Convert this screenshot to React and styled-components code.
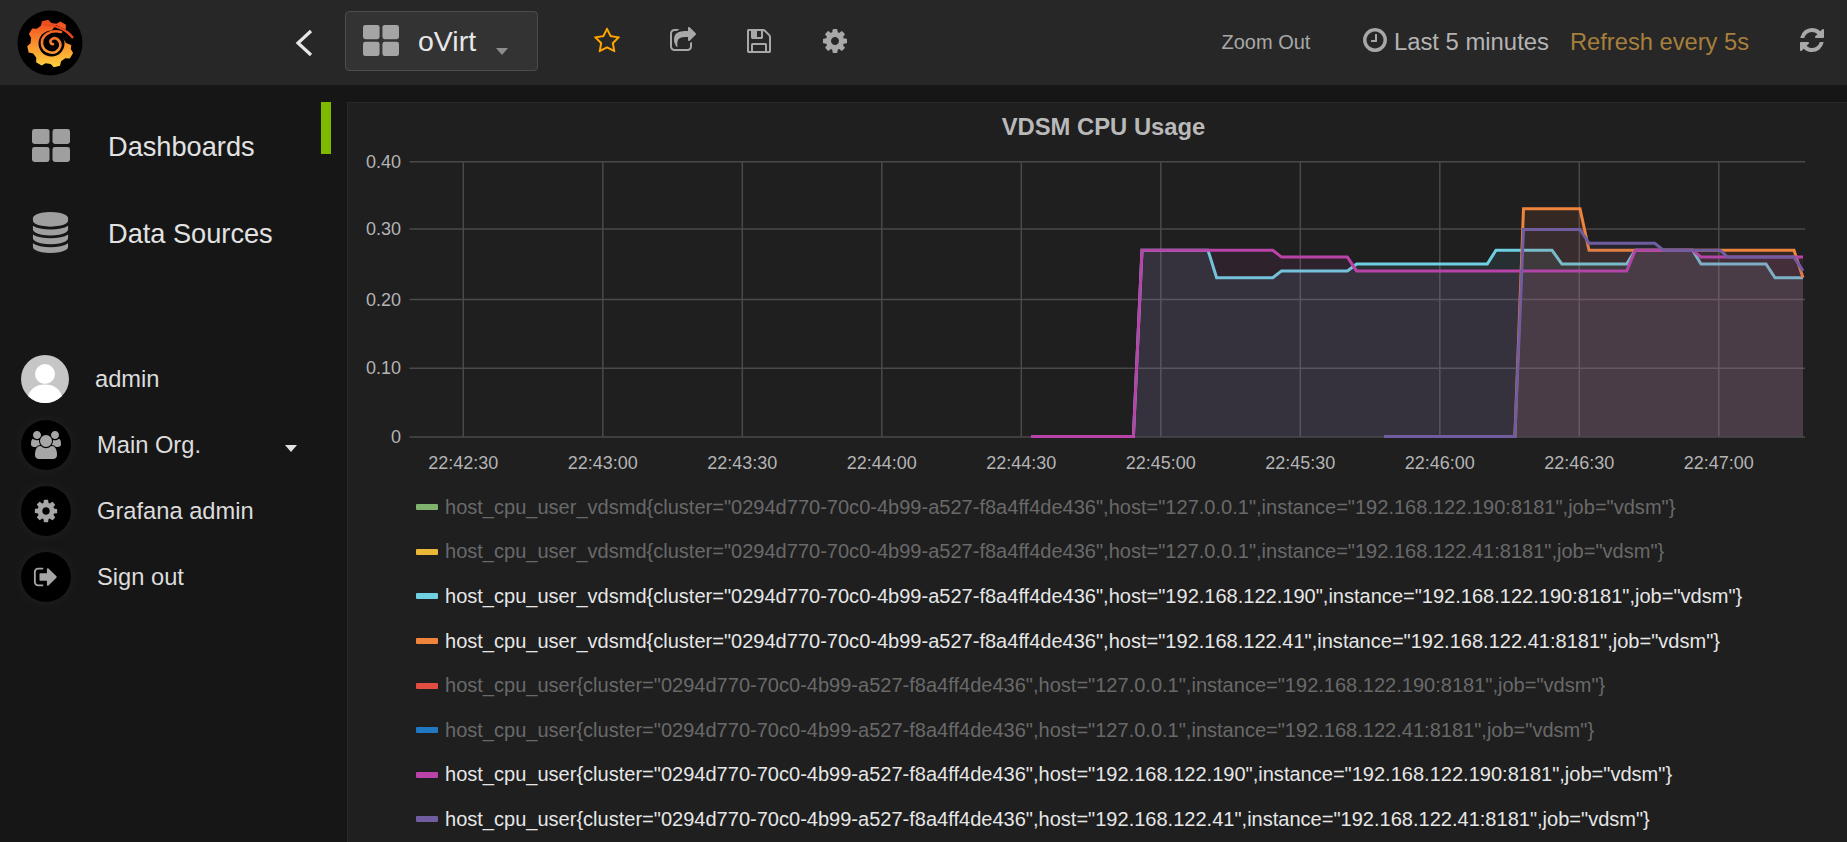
import styled, { createGlobalStyle } from "styled-components";

const GlobalStyle = createGlobalStyle`
  html, body {
    margin: 0;
    height: 100%;
    background: #161616;
    overflow: hidden;
  }
  body {
    font-family: "Liberation Sans", Arial, sans-serif;
  }
`;

// font awesome 4 glyphs
const ICONS = {
  star: "M1201 1004l306-297-422-62-189-382-189 382-422 62 306 297-73 421 378-199 377 199zm527-357q0 22-26 48l-363 354 86 500q1 7 1 20 0 50-41 50-19 0-40-12l-449-236-449 236q-22 12-40 12-21 0-31.5-14.5t-10.5-35.5q0-6 2-20l86-500-364-354q-25-27-25-48 0-37 56-46l502-73 225-455q19-41 49-41t49 41l225 455 502 73q56 9 56 46z",
  share: "M1472 989v259q0 119-84.5 203.5t-203.5 84.5h-832q-119 0-203.5-84.5t-84.5-203.5v-832q0-119 84.5-203.5t203.5-84.5h255q13 0 22.5 9.5t9.5 22.5q0 27-26 32-77 26-133 60-10 4-16 4h-112q-66 0-113 47t-47 113v832q0 66 47 113t113 47h832q66 0 113-47t47-113v-214q0-19 18-29 28-13 54-37 16-16 35-8 21 9 21 29zm237-496l-384 384q-18 19-45 19-12 0-25-5-39-17-39-59v-192h-160q-323 0-438 131-119 137-74 473 3 23-20 34-8 2-12 2-16 0-26-13-10-14-21-31t-39.5-68.5-49.5-99.5-38.5-114-17.5-122q0-49 3.5-91t14-90 28-88 47-81.5 68.5-74 94.5-61.5 124.5-48.5 159.5-30.5 196.5-11h160v-192q0-42 39-59 13-5 25-5 26 0 45 19l384 384q19 19 19 45t-19 45z",
  save: "M512 1536h768v-384h-768v384zm896 0h128v-896q0-14-10-38.5t-20-34.5l-281-281q-10-10-34-20t-39-10v416q0 40-28 68t-68 28h-576q-40 0-68-28t-28-68v-416h-128v1280h128v-416q0-40 28-68t68-28h832q40 0 68 28t28 68v416zm-384-928v-320q0-13-9.5-22.5t-22.5-9.5h-192q-13 0-22.5 9.5t-9.5 22.5v320q0 13 9.5 22.5t22.5 9.5h192q13 0 22.5-9.5t9.5-22.5zm640 32v928q0 40-28 68t-68 28h-1344q-40 0-68-28t-28-68v-1344q0-40 28-68t68-28h928q40 0 88 20t76 48l280 280q28 28 48 76t20 88z",
  cog: "M1152 896q0-106-75-181t-181-75-181 75-75 181 75 181 181 75 181-75 75-181zm512-109v222q0 12-8 23t-20 13l-185 28q-19 54-39 91 35 50 107 138 10 12 10 25t-9 23q-27 37-99 108t-94 71q-12 0-26-9l-138-108q-44 23-91 38-16 136-29 186-7 28-36 28h-222q-14 0-24.5-8.5t-11.5-21.5l-28-184q-49-16-90-37l-141 107q-10 9-25 9-14 0-25-11-126-114-165-168-7-10-7-23 0-12 8-23 15-21 51-66.5t54-70.5q-27-50-41-99l-183-27q-13-2-21-12.5t-8-23.5v-222q0-12 8-23t19-13l186-28q14-46 39-92-40-57-107-138-10-12-10-24 0-10 9-23 26-36 98.5-107.5t94.5-71.5q13 0 26 10l138 107q44-23 91-38 16-136 29-186 7-28 36-28h222q14 0 24.5 8.5t11.5 21.5l28 184q49 16 90 37l142-107q9-9 24-9 13 0 25 10 129 119 165 170 7 8 7 22 0 12-8 23-15 21-51 66.5t-54 70.5q26 50 41 98l183 28q13 2 21 12.5t8 23.5z",
  clock: "M1024 544v448q0 14-9 23t-23 9h-320q-14 0-23-9t-9-23v-64q0-14 9-23t23-9h224v-352q0-14 9-23t23-9h64q14 0 23 9t9 23zm416 352q0-148-73-273t-198-198-273-73-273 73-198 198-73 273 73 273 198 198 273 73 273-73 198-198 73-273zm224 0q0 209-103 385.5t-279.5 279.5-385.5 103-385.5-103-279.5-279.5-103-385.5 103-385.5 279.5-279.5 385.5-103 385.5 103 279.5 279.5 103 385.5z",
  refresh: "M1639 1056q0 5-1 7-64 268-268 434.5t-478 166.5q-146 0-282.5-55t-243.5-157l-129 129q-19 19-45 19t-45-19-19-45v-448q0-26 19-45t45-19h448q26 0 45 19t19 45-19 45l-137 137q71 66 161 102t187 36q134 0 250-65t186-179q11-17 53-117 8-23 30-23h192q13 0 22.5 9.5t9.5 22.5zm25-800v448q0 26-19 45t-45 19h-448q-26 0-45-19t-19-45 19-45l138-138q-148-137-349-137-134 0-250 65t-186 179q-11 17-53 117-8 23-30 23h-199q-13 0-22.5-9.5t-9.5-22.5v-7q65-268 270-434.5t480-166.5q146 0 284 55.5t245 156.5l130-129q19-19 45-19t45 19 19 45z",
  signOut: "M704 1440q0 4 1 20t.5 26.5-3 23.5-10 19.5-20.5 6.5h-320q-119 0-203.5-84.5t-84.5-203.5v-704q0-119 84.5-203.5t203.5-84.5h320q13 0 22.5 9.5t9.5 22.5q0 4 1 20t.5 26.5-3 23.5-10 19.5-20.5 6.5h-320q-66 0-113 47t-47 113v704q0 66 47 113t113 47h312l11.5 1 11.5 3 8 5.5 7 9 2 13.5zm928-544q0 26-19 45l-544 544q-19 19-45 19t-45-19-19-45v-288h-448q-26 0-45-19t-19-45v-384q0-26 19-45t45-19h448v-288q0-26 19-45t45-19 45 19l544 544q19 19 19 45z",
  database: "M896 768q237 0 443-43t325-127v170q0 69-103 128t-280 93.5-385 34.5-385-34.5-280-93.5-103-128v-170q119 84 325 127t443 43zm0 768q237 0 443-43t325-127v170q0 69-103 128t-280 93.5-385 34.5-385-34.5-280-93.5-103-128v-170q119 84 325 127t443 43zm0-384q237 0 443-43t325-127v170q0 69-103 128t-280 93.5-385 34.5-385-34.5-280-93.5-103-128v-170q119 84 325 127t443 43zm0-1152q208 0 385 34.5t280 93.5 103 128v128q0 69-103 128t-280 93.5-385 34.5-385-34.5-280-93.5-103-128v-128q0-69 103-128t280-93.5 385-34.5z",
  users: "M593 896q-162 5-265 128h-134q-82 0-138-40.5t-56-118.5q0-353 124-353 6 0 43.5 21t97.5 42.5 119 21.5q67 0 133-23-5 37-5 66 0 139 81 256zm1071 637q0 120-73 189.5t-194 69.5h-874q-121 0-194-69.5t-73-189.5q0-53 3.5-103.5t14-109 26.5-108.5 43-97.5 62-81 85.5-53.5 111.5-20q10 0 43 21.5t73 48 107 48 135 21.5 135-21.5 107-48 73-48 43-21.5q61 0 111.5 20t85.5 53.5 62 81 43 97.5 26.5 108.5 14 109 3.5 103.5zm-1024-1277q0 106-75 181t-181 75-181-75-75-181 75-181 181-75 181 75 75 181zm704 384q0 159-112.5 271.5t-271.5 112.5-271.5-112.5-112.5-271.5 112.5-271.5 271.5-112.5 271.5 112.5 112.5 271.5zm576 225q0 78-56 118.5t-138 40.5h-134q-103-123-265-128 81-117 81-256 0-29-5-66 66 23 133 23 59 0 119-21.5t97.5-42.5 43.5-21q124 0 124 353zm-128-609q0 106-75 181t-181 75-181-75-75-181 75-181 181-75 181 75 75 181z",
};

const Fa = ({name, size, wide, color}) => (
  <svg width={size} height={size} viewBox={wide ? "0 0 1920 1792" : "0 0 1792 1792"} fill={color} style={{display: "block", flexShrink: 0}}>
    <path d={ICONS[name]} />
  </svg>
);

const DashIcon = ({width, height, color}) => (
  <svg width={width} height={height} viewBox="0 0 38 34" fill={color} preserveAspectRatio="none" style={{display: "block", flexShrink: 0}}>
    <rect x="0" y="0" width="17.5" height="15.5" rx="2.5" />
    <rect x="20.5" y="0" width="17.5" height="15.5" rx="2.5" />
    <rect x="0" y="18.5" width="17.5" height="15.5" rx="2.5" />
    <rect x="20.5" y="18.5" width="17.5" height="15.5" rx="2.5" />
  </svg>
);

const gearPoints = () => {
  const cx = 41, cy = 38.5, teeth = 8, pts = [];
  for (let i = 0; i < teeth; i++) {
    const a = (i / teeth) * Math.PI * 2 - Math.PI / 2 - 0.25;
    const step = (Math.PI * 2) / teeth;
    [[-0.34, 20.5], [-0.17, 24], [0.17, 24], [0.34, 20.5]].forEach(([d, r]) => {
      const t = a + d * step;
      pts.push(`${(cx + Math.cos(t) * r).toFixed(1)},${(cy + Math.sin(t) * r).toFixed(1)}`);
    });
  }
  return pts.join(" ");
};

const GrafanaLogo = () => (
  <svg width="80" height="76" viewBox="0 0 80 76" style={{display: "block"}}>
    <defs>
      <linearGradient id="flame" x1="0" y1="0" x2="0" y2="1">
        <stop offset="0" stopColor="#f0451f" />
        <stop offset="0.5" stopColor="#fb8f2c" />
        <stop offset="1" stopColor="#fdd23f" />
      </linearGradient>
      <linearGradient id="flameInner" gradientUnits="userSpaceOnUse" x1="0" y1="14" x2="0" y2="60">
        <stop offset="0" stopColor="#f0451f" />
        <stop offset="1" stopColor="#fdb43a" />
      </linearGradient>
    </defs>
    <circle cx="40" cy="38" r="32.5" fill="#000" />
    <polygon points={gearPoints()} fill="url(#flame)" />
    <path d="M46 20 L68 30 L66 42 L56 38 Q52 30 42 25 Z" fill="#000" />
    <circle cx="41.5" cy="38.5" r="13" fill="#000" />
    <path d="M34 19.5 C46 20 57 25 63 33" fill="none" stroke="#ea4a20" strokeWidth="2.4" />
    <path d="M51 27 C40 24 31 31 32 39 C33 47 44 51 49 44 C53 38 47 31 42 34 C39 36 41 40 43 39" fill="none" stroke="url(#flameInner)" strokeWidth="2.6" strokeLinecap="round" />
  </svg>
);

const LEGEND = [
  {color: "#7eb26d", off: true, text: 'host_cpu_user_vdsmd{cluster="0294d770-70c0-4b99-a527-f8a4ff4de436",host="127.0.0.1",instance="192.168.122.190:8181",job="vdsm"}'},
  {color: "#eab839", off: true, text: 'host_cpu_user_vdsmd{cluster="0294d770-70c0-4b99-a527-f8a4ff4de436",host="127.0.0.1",instance="192.168.122.41:8181",job="vdsm"}'},
  {color: "#6ed0e0", text: 'host_cpu_user_vdsmd{cluster="0294d770-70c0-4b99-a527-f8a4ff4de436",host="192.168.122.190",instance="192.168.122.190:8181",job="vdsm"}'},
  {color: "#ef843c", text: 'host_cpu_user_vdsmd{cluster="0294d770-70c0-4b99-a527-f8a4ff4de436",host="192.168.122.41",instance="192.168.122.41:8181",job="vdsm"}'},
  {color: "#e24d42", off: true, text: 'host_cpu_user{cluster="0294d770-70c0-4b99-a527-f8a4ff4de436",host="127.0.0.1",instance="192.168.122.190:8181",job="vdsm"}'},
  {color: "#1f78c1", off: true, text: 'host_cpu_user{cluster="0294d770-70c0-4b99-a527-f8a4ff4de436",host="127.0.0.1",instance="192.168.122.41:8181",job="vdsm"}'},
  {color: "#ba43a9", text: 'host_cpu_user{cluster="0294d770-70c0-4b99-a527-f8a4ff4de436",host="192.168.122.190",instance="192.168.122.190:8181",job="vdsm"}'},
  {color: "#705da0", text: 'host_cpu_user{cluster="0294d770-70c0-4b99-a527-f8a4ff4de436",host="192.168.122.41",instance="192.168.122.41:8181",job="vdsm"}'},
];

// [x on the page, value], read off the graph
const SERIES = [
  {color: "#6ed0e0", points: [[1031, 0], [1133.4, 0], [1142, .27], [1208, .27], [1216.6, .23], [1272.8, .23], [1281.5, .24], [1347.4, .24], [1356.6, .25], [1487.3, .25], [1496, .27], [1552, .27], [1561.9, .25], [1626.7, .25], [1635.3, .27], [1692.6, .27], [1701, .25], [1766, .25], [1775, .23], [1803, .23]]},
  {color: "#ef843c", points: [[1384, 0], [1514.9, 0], [1523.5, .33], [1580, .33], [1589, .27], [1794, .27], [1803, .23]]},
  {color: "#ba43a9", points: [[1031, 0], [1133.4, 0], [1142, .27], [1272.8, .27], [1281.5, .26], [1347.4, .26], [1356.6, .24], [1626.7, .24], [1635.3, .27], [1692.6, .27], [1701, .26], [1803, .26]]},
  {color: "#705da0", points: [[1384, 0], [1514.9, 0], [1523.5, .30], [1580, .30], [1589, .28], [1654.8, .28], [1663.4, .27], [1720, .27], [1727.7, .26], [1794, .26], [1803, .24]]},
];

const BASE_Y = 436.5;
const valueY = (v) => BASE_Y - v * 690;
const pointList = (points) => points.map(([x, v]) => `${x},${valueY(v).toFixed(1)}`).join(" ");

const TIMES = ["22:42:30", "22:43:00", "22:43:30", "22:44:00", "22:44:30", "22:45:00", "22:45:30", "22:46:00", "22:46:30", "22:47:00"];
const TICKS = [["0.40", 161.7], ["0.30", 229], ["0.20", 299.5], ["0.10", 368.3], ["0", 437]];

const Graph = () => (
  <GraphSvg width="1500" height="340" viewBox="347 145 1500 340">
    {TICKS.map(([label, y]) => (
      <g key={label}>
        <GridLine x1="409.5" x2="1805" y1={y} y2={y} />
        <AxisText x="401" y={y + 6} textAnchor="end">{label}</AxisText>
      </g>
    ))}
    {TIMES.map((time, i) => {
      const x = 463.3 + 139.5 * i;
      return (
        <g key={time}>
          <GridLine x1={x} x2={x} y1="161.7" y2="437" />
          <AxisText x={x} y="468.5" textAnchor="middle">{time}</AxisText>
        </g>
      );
    })}
    {SERIES.map((s) => {
      const last = s.points[s.points.length - 1][0];
      return (
        <g key={s.color}>
          <polygon points={`${s.points[0][0]},${BASE_Y} ${pointList(s.points)} ${last},${BASE_Y}`} fill={s.color} fillOpacity="0.1" />
          <polyline points={pointList(s.points)} fill="none" stroke={s.color} strokeWidth="3" />
        </g>
      );
    })}
  </GraphSvg>
);

const App = () => (
  <>
    <GlobalStyle />
    <Page>
      <TopBar>
        <LogoBox><GrafanaLogo /></LogoBox>
        <BackButton>
          <svg width="18" height="28" viewBox="0 0 18 28" fill="none" stroke="#e6e6e6" strokeWidth="3.2">
            <path d="M16 2 L3 14 L16 26" />
          </svg>
        </BackButton>
        <DashPicker>
          <DashIcon width={36} height={31} color="#a5a5a5" />
          <DashName>oVirt</DashName>
          <PickerCaret />
        </DashPicker>
        <IconGroup>
          <Fa name="star" size={28} color="#ffa500" />
          <Fa name="share" size={28} color="#a8a8a8" />
          <Fa name="save" size={28} color="#a8a8a8" />
          <Fa name="cog" size={28} color="#a8a8a8" />
        </IconGroup>
        <TimeGroup>
          <ZoomOut>Zoom Out</ZoomOut>
          <TimeRange><Fa name="clock" size={28} color="#a8a8a8" /><RangeLabel>Last 5 minutes</RangeLabel></TimeRange>
          <RefreshText>Refresh every 5s</RefreshText>
          <Fa name="refresh" size={28} color="#a8a8a8" />
        </TimeGroup>
      </TopBar>
      <Body>
        <Sidebar>
          <NavItem>
            <NavIcon $left={32}><DashIcon width={38} height={33} color="#9f9f9f" /></NavIcon>
            <NavLabel>Dashboards</NavLabel>
          </NavItem>
          <NavItem>
            <NavIcon $left={30}><Fa name="database" size={41} color="#9f9f9f" /></NavIcon>
            <NavLabel>Data Sources</NavLabel>
          </NavItem>
          <UserMenu>
            <UserRow>
              <Avatar>
                <svg width="48" height="48" viewBox="0 0 48 48">
                  <circle cx="24" cy="24" r="24" fill="#c6c6c6" />
                  <circle cx="24" cy="19" r="10" fill="#fff" />
                  <path d="M7 41 C10 32 17 29.5 24 29.5 C31 29.5 38 32 41 41 A24 24 0 0 1 7 41 Z" fill="#fff" />
                </svg>
              </Avatar>
              <UserLabel>admin</UserLabel>
            </UserRow>
            <UserRow>
              <RoundIcon><Fa name="users" size={30} wide color="#a6a6a6" /></RoundIcon>
              <UserLabel>Main Org.</UserLabel>
              <OrgCaret />
            </UserRow>
            <UserRow>
              <RoundIcon><Fa name="cog" size={26} color="#a6a6a6" /></RoundIcon>
              <UserLabel>Grafana admin</UserLabel>
            </UserRow>
            <UserRow>
              <RoundIcon><Fa name="signOut" size={26} color="#a6a6a6" /></RoundIcon>
              <UserLabel>Sign out</UserLabel>
            </UserRow>
          </UserMenu>
        </Sidebar>
        <Gutter><ActiveMarker /></Gutter>
        <Panel>
          <PanelTitle>VDSM CPU Usage</PanelTitle>
          <Graph />
          <Legend>
            {LEGEND.map((item) => (
              <LegendRow key={item.text} $off={item.off}>
                <Swatch $color={item.color} />
                {item.text}
              </LegendRow>
            ))}
          </Legend>
        </Panel>
      </Body>
    </Page>
  </>
);

const Page = styled.div`
  width: 1847px;
  height: 842px;
  display: flex;
  flex-direction: column;
  overflow: hidden;
`;

const TopBar = styled.header`
  height: 85px;
  flex-shrink: 0;
  background: #272727;
  display: flex;
  align-items: center;
`;

const LogoBox = styled.div`
  width: 295px;
  padding-left: 10px;
  box-sizing: border-box;
  flex-shrink: 0;
`;

const BackButton = styled.div`
  width: 50px;
  flex-shrink: 0;
  display: flex;
  svg {
    display: block;
  }
`;

const DashPicker = styled.div`
  width: 193px;
  height: 60px;
  box-sizing: border-box;
  margin-top: -4px;
  padding-left: 17px;
  background: #333;
  border: 1px solid #4c4c4c;
  border-radius: 4px;
  display: flex;
  align-items: center;
`;

const DashName = styled.span`
  margin: 2px 0 0 19px;
  font-size: 28.5px;
  color: #e8e8e8;
`;

const PickerCaret = styled.span`
  margin: 21px 0 0 20px;
  border-left: 6.5px solid transparent;
  border-right: 6.5px solid transparent;
  border-top: 7px solid #8e8e8e;
`;

const IconGroup = styled.div`
  margin: -4px 0 0 55px;
  display: flex;
  gap: 48px;
`;

const TimeGroup = styled.div`
  margin: -5px 0 0 auto;
  padding-right: 21px;
  display: flex;
  align-items: center;
`;

const ZoomOut = styled.span`
  padding-top: 4px;
  font-size: 20px;
  color: #a8a8a8;
  margin-right: 50.5px;
`;

const TimeRange = styled.span`
  display: flex;
  align-items: center;
  gap: 5px;
  font-size: 23.85px;
  color: #b4b4b4;
  margin-right: 21px;
`;

const RangeLabel = styled.span`
  padding-top: 4px;
`;

const RefreshText = styled.span`
  padding-top: 4px;
  font-size: 23.7px;
  color: #a67f3c;
  margin-right: 49px;
`;

const Body = styled.div`
  flex: 1;
  display: flex;
  min-height: 0;
`;

const Sidebar = styled.nav`
  width: 321px;
  flex-shrink: 0;
  padding-top: 17px;
  box-sizing: border-box;
  background: #161616;
`;

const NavItem = styled.div`
  height: 87px;
  display: flex;
  align-items: center;
`;

const NavLabel = styled.span`
  padding-top: 3px;
  font-size: 27.2px;
  color: #e2e2e2;
`;

const NavIcon = styled.span`
  width: 108px;
  padding-left: ${(p) => p.$left}px;
  box-sizing: border-box;
  display: flex;
`;

const UserMenu = styled.div`
  margin-top: 70px;
  padding-left: 21px;
  display: flex;
  flex-direction: column;
`;

const UserRow = styled.div`
  height: 66px;
  display: flex;
  align-items: center;
`;

const Avatar = styled.span`
  width: 48px;
  height: 48px;
  margin-right: 26px;
  svg {
    display: block;
  }
`;

const RoundIcon = styled.span`
  width: 50px;
  height: 50px;
  margin-right: 26px;
  border-radius: 50%;
  background: #000;
  box-shadow: 0 0 14px rgba(255, 255, 255, 0.05);
  display: flex;
  align-items: center;
  justify-content: center;
`;

const UserLabel = styled.span`
  font-size: 23.7px;
  color: #dcdcdc;
`;

const OrgCaret = styled.span`
  margin: 6px 0 0 84px;
  border-left: 6.5px solid transparent;
  border-right: 6.5px solid transparent;
  border-top: 7px solid #e2e2e2;
`;

const Gutter = styled.div`
  width: 26px;
  flex-shrink: 0;
  padding-top: 17px;
  box-sizing: border-box;
`;

const ActiveMarker = styled.div`
  width: 10px;
  height: 52px;
  background: #7eb900;
`;

const Panel = styled.main`
  flex: 1;
  margin-top: 17px;
  background: #1f1f20;
  border-left: 1px solid #292929;
  border-top: 1px solid #292929;
  box-sizing: border-box;
  min-width: 0;
`;

const PanelTitle = styled.h2`
  margin: 0;
  height: 42px;
  padding: 10px 0 0 12px;
  box-sizing: border-box;
  text-align: center;
  font-size: 23.8px;
  line-height: 27px;
  font-weight: 700;
  color: #b9b9b9;
`;

const GraphSvg = styled.svg`
  display: block;
  margin-left: -1px;
`;

const GridLine = styled.line`
  stroke: #4a4a4a;
  stroke-width: 1.5;
`;

const AxisText = styled.text`
  font-size: 18px;
  fill: #b4b4b4;
`;

const Legend = styled.ul`
  list-style: none;
  margin: 0;
  padding: 0 0 0 68px;
`;

const LegendRow = styled.li`
  height: 44.6px;
  display: flex;
  align-items: center;
  font-size: 20.05px;
  white-space: nowrap;
  color: ${(p) => (p.$off ? "#696969" : "#e6e6e6")};
`;

const Swatch = styled.span`
  width: 22px;
  height: 6px;
  margin-right: 7px;
  flex-shrink: 0;
  border-radius: 1px;
  background: ${(p) => p.$color};
`;

export default App;
